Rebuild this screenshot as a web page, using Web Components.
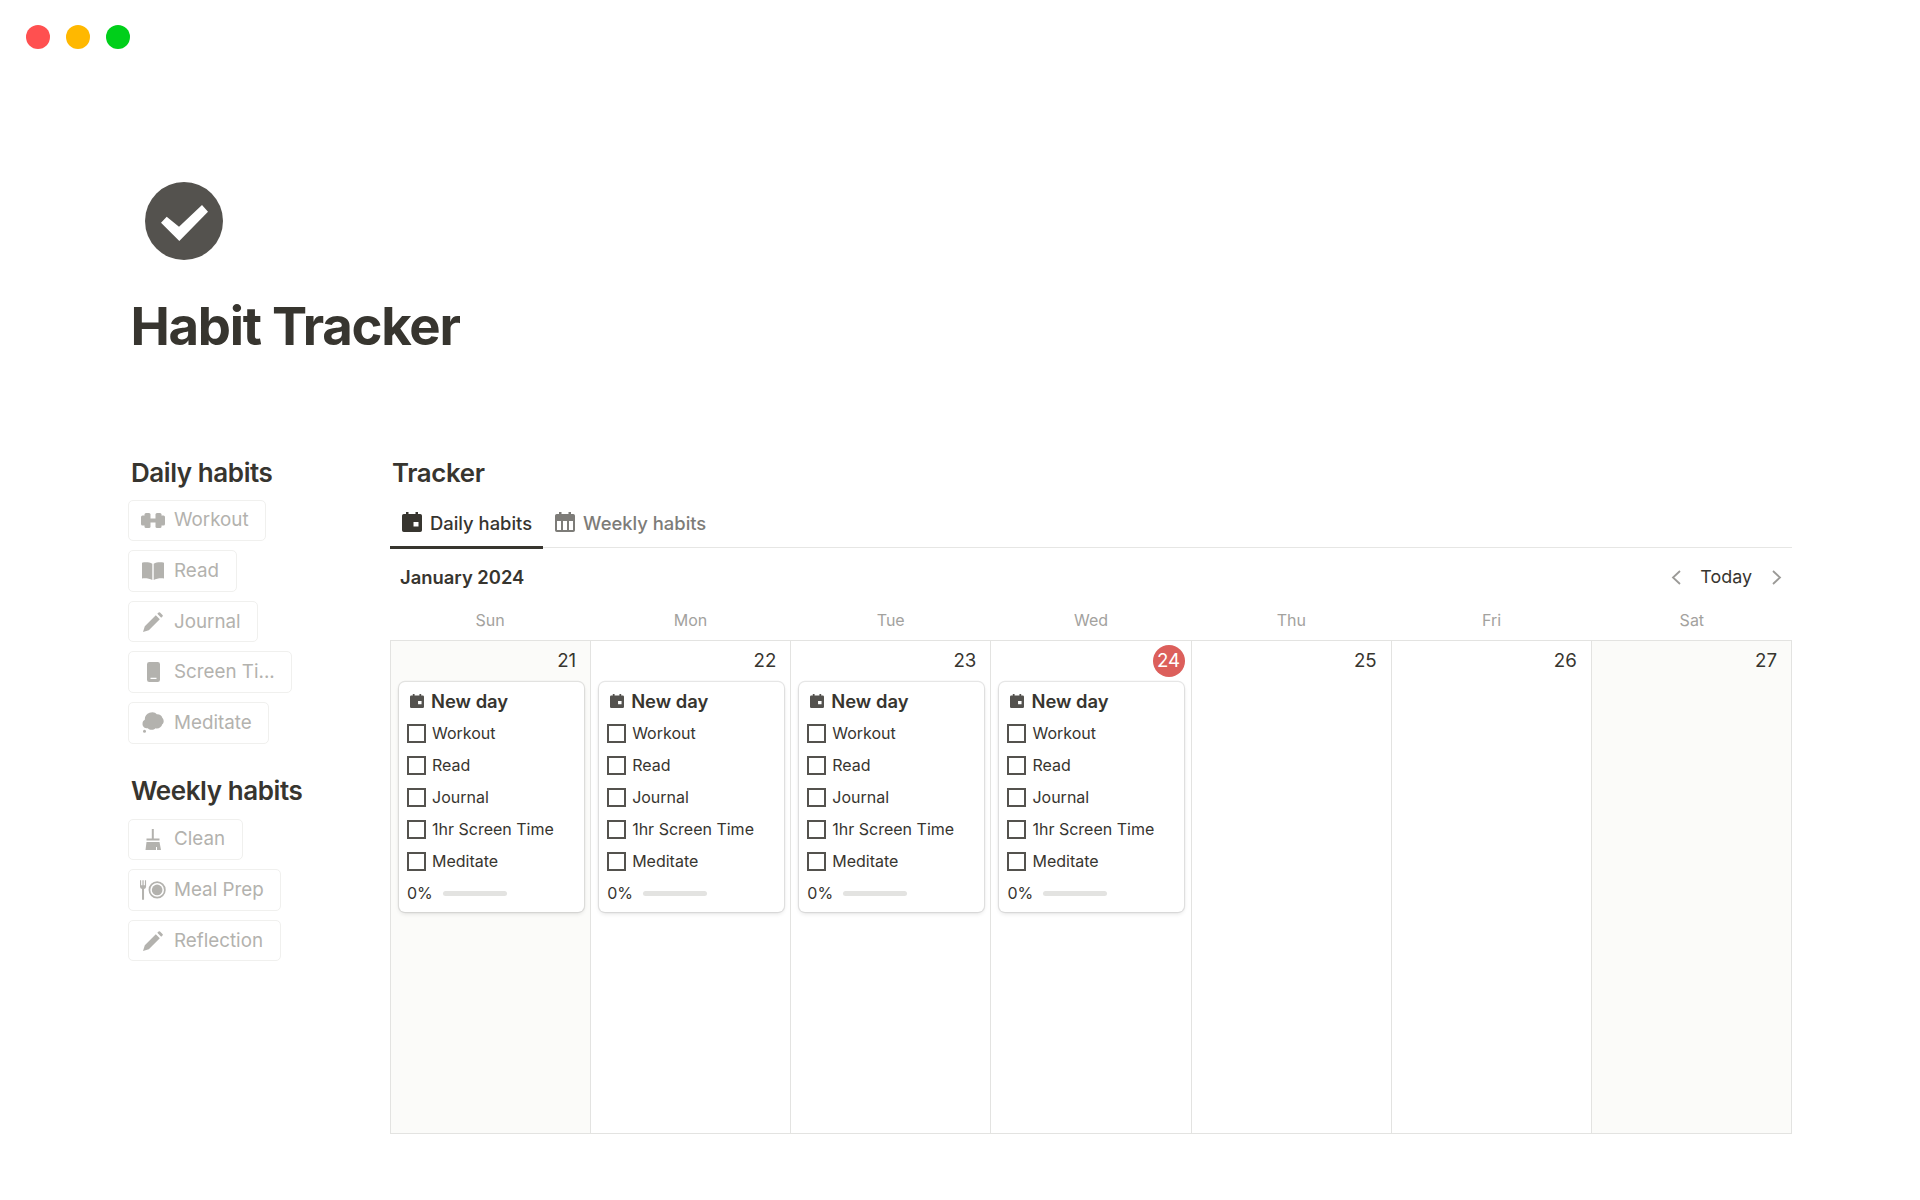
<!DOCTYPE html>
<html lang="en"><head><meta charset="utf-8"><title>Habit Tracker</title>
<style>
html,body{margin:0;padding:0;background:#fff}
body{width:1920px;height:1200px;overflow:hidden;font-family:Inter,"Liberation Sans",sans-serif;color:#37352f}
</style></head><body>
<habit-page></habit-page>
<script>
const ICONS={
dumbbell:'<svg viewBox="0 0 24 15" width="24" height="15"><g fill="currentColor"><rect x="0" y="2.500" width="5" height="10" rx="1.500"/><rect x="3.500" y="0" width="6" height="15" rx="1.500"/><rect x="9" y="5.500" width="6" height="4"/><rect x="14.500" y="0" width="6" height="15" rx="1.500"/><rect x="19" y="2.500" width="5" height="10" rx="1.500"/></g></svg>',
book:'<svg viewBox="0 0 22 18" width="22" height="18"><path fill="currentColor" d="M0 .8C3.500 0 7.500 .3 10.300 1.800V18C7.500 16.500 3.500 16 0 16.500ZM22 .8C18.500 0 14.500 .3 11.700 1.800V18C14.500 16.500 18.500 16 22 16.500Z"/></svg>',
pencil:'<svg viewBox="0 0 20 20" width="20" height="20"><path fill="currentColor" d="M0 20 1.800 14.200 12.800 3.200 16.800 7.200 5.800 18.200ZM14.300 1.800 15.600.500a1 1 0 0 1 1.400 0L19.500 3a1 1 0 0 1 0 1.400L18.200 5.700Z"/></svg>',
phone:'<svg viewBox="0 0 13 20" width="13" height="20"><path fill="currentColor" fill-rule="evenodd" d="M2.300 0h8.400A2.300 2.300 0 0 1 13 2.300v15.400a2.300 2.300 0 0 1-2.300 2.300H2.300A2.300 2.300 0 0 1 0 17.700V2.300A2.300 2.300 0 0 1 2.300 0ZM3.500 15.800v1.300h6v-1.300Z"/></svg>',
cloud:'<svg viewBox="0 0 22 21" width="22" height="21"><g fill="currentColor"><path d="M7.500.8C10.500-.4 13.500.3 14.800 2.200 17.500 2 19.800 3.300 20.300 5.800 22 7.500 22.300 10.500 20.300 12.300 19.500 15.500 16.500 17 13.500 16.300 11.500 18.300 7.800 18.300 5.800 16.300 3 16.500.5 14.800.5 12 .5 10 1.300 8.500 2.800 7.800 2.600 4.500 4.500 1.800 7.500.8Z"/><circle cx="2.500" cy="19.300" r="1.500"/></g></svg>',
broom:'<svg viewBox="0 0 16 21" width="16" height="21"><g fill="currentColor"><rect x="6.800" y="0" width="2" height="10"/><rect x="1.500" y="9.500" width="13" height="2"/><path d="M1.500 13h13L16 21H12v-3h-1v3H0.500Z"/></g></svg>',
meal:'<svg viewBox="0 0 27 20" width="27" height="20"><g fill="currentColor"><path d="M0 0h1.200v5H2.500V0H3.800v5h1.300V0H6.300v6.500A2.500 2.500 0 0 1 4.200 9V20H2.100V9A2.500 2.500 0 0 1 0 6.500Z"/><path fill-rule="evenodd" d="M17.800 1a8.900 8.900 0 1 1 0 17.800a8.900 8.900 0 0 1 0-17.800ZM17.800 2.800a7.100 7.100 0 1 0 0 14.200a7.100 7.100 0 0 0 0-14.200Z"/><circle cx="17.800" cy="9.900" r="5.500"/></g></svg>',
cal:'<svg viewBox="0 0 20 20" width="100%" height="100%" style="display:block"><path fill="currentColor" fill-rule="evenodd" d="M4 0h2.500v2h7V0H16v2h2.200A1.800 1.800 0 0 1 20 3.800v14.400a1.800 1.800 0 0 1-1.800 1.800H1.800A1.800 1.800 0 0 1 0 18.200V3.800A1.800 1.800 0 0 1 1.800 2H4ZM11.500 10v4.500H16.500V10Z"/></svg>',
week:'<svg viewBox="0 0 20 20" width="100%" height="100%" style="display:block"><path fill="currentColor" fill-rule="evenodd" d="M4 0h2.500v2h7V0H16v2h2.200A1.800 1.800 0 0 1 20 3.800v14.400a1.800 1.800 0 0 1-1.800 1.800H1.800A1.800 1.800 0 0 1 0 18.200V3.800A1.800 1.800 0 0 1 1.800 2H4ZM2 9v9h4V9ZM8 9v9h4V9ZM14 9v9h4V9Z"/></svg>'
};
function define(name,html,extra){
  const t=document.createElement('template');t.innerHTML=html;
  customElements.define(name,class extends HTMLElement{
    constructor(){super();this.attachShadow({mode:'open'}).appendChild(t.content.cloneNode(true));}
    connectedCallback(){if(extra)extra(this,this.shadowRoot);}
  });
}
define('mac-lights',`<style>:host{display:flex;gap:16px;padding:25px 0 0 26px}
i{display:block;width:24px;height:24px;border-radius:50%}</style>
<i style="background:#ff5050"></i><i style="background:#ffb800"></i><i style="background:#00cf1a"></i>`);

define('page-head',`<style>:host{display:block;padding:133px 0 0 133px}
.ic{display:block;margin-left:12px}
h1{margin:22px 0 0 -2.500px;font:700 52.700px/88px Inter,sans-serif;letter-spacing:-1.300px;color:#37352f}</style>
<svg class="ic" width="78" height="78" viewBox="0 0 78 78"><circle cx="39" cy="39" r="39" fill="#54524e"/><path d="M16 40.700 34.300 59 63 29.700 57 23 34 44.700 21.700 34.700Z" fill="#fff"/></svg>
<h1><slot></slot></h1>`);

define('side-heading',`<style>:host{display:block;font:600 26px/34px Inter,sans-serif;letter-spacing:-.42px;color:#37352f;padding-left:3px}</style><slot></slot>`);

define('habit-button',`<style>:host{display:flex;width:max-content;box-sizing:border-box;height:41.600px;align-items:center;border:1px solid #f0f0ee;border-radius:5px;padding:0 16.500px 0 11px;color:#b3b2ae;font:400 18.800px/24px Inter,sans-serif;margin-bottom:9px}
.i{width:26px;height:24px;display:flex;align-items:center;justify-content:center;margin-right:8px;flex:none}
svg{display:block}</style>
<span class="i"></span><slot></slot>`,(el,s)=>{s.querySelector('.i').innerHTML=ICONS[el.getAttribute('icon')]});

define('side-bar',`<style>:host{display:block;flex:none;box-sizing:border-box;padding-left:128px;width:390px}</style><slot></slot>`);

define('view-tabs',`<style>:host{display:flex;border-bottom:1px solid #e6e6e4;height:43px;box-sizing:border-box;font:500 18.400px/24px Inter,sans-serif;margin-top:15px}
</style><slot></slot>`);

define('view-tab',`<style>:host{display:flex;align-items:center;box-sizing:border-box;height:44px;padding:0 11px 8px 12px;color:#7d7c78;gap:8px}
:host([active]){color:#37352f;border-bottom:3px solid #37352f;padding-bottom:5px}
.i{width:20px;height:20px;display:block;margin-top:-3px}</style><span class="i"></span><slot></slot>`,(el,s)=>{s.querySelector('.i').innerHTML=ICONS[el.getAttribute('icon')]});

define('cal-bar',`<style>:host{display:flex;align-items:center;justify-content:space-between;height:28px;margin-top:15px;padding:0 10px;font:600 18.400px/28px Inter,sans-serif;color:#37352f}
.r{display:flex;align-items:center;font:400 17.900px/28px Inter,sans-serif}
svg{display:block}.t{margin:0 20px 0 19.200px}</style>
<span><slot></slot></span><span class="r"><svg width="10" height="15" viewBox="0 0 10 15"><path d="M9 1 2 7.500 9 14" fill="none" stroke="#9b9a97" stroke-width="1.800"/></svg><span class="t">Today</span><svg width="10" height="15" viewBox="0 0 10 15"><path d="M1 1l7 6.500L1 14" fill="none" stroke="#9b9a97" stroke-width="1.800"/></svg></span>`);

define('week-head',`<style>:host{display:grid;grid-template-columns:repeat(7,1fr);height:41px;align-items:center;margin-top:8px;text-align:center;font:400 16px/20px Inter,sans-serif;color:#a3a29e;box-sizing:border-box}
::slotted(span){display:block}</style><slot></slot>`);

define('cal-grid',`<style>:host{display:grid;grid-template-columns:repeat(7,1fr);height:494px;box-sizing:border-box;border-top:1px solid #e3e3e1;border-left:1px solid #e3e3e1;}</style><slot></slot>`);

define('day-cell',`<style>:host{display:block;box-sizing:border-box;border-right:1px solid #e3e3e1;border-bottom:1px solid #e3e3e1;min-width:0;padding:0 7px 0 7px}
:host([weekend]){background:#fbfbf9}
.n{display:flex;justify-content:flex-end;height:40px;align-items:center;font:400 18.700px/24px Inter,sans-serif;color:#37352f;padding-right:7px;box-sizing:border-box}
:host([today]) .n span{background:#dc5f5b;color:#fff;border-radius:50%;width:32px;height:32px;display:flex;align-items:center;justify-content:center;margin-right:-1px}
:host([today]) .n{padding-right:0}
</style><div class="n"><span></span></div><slot></slot>`,(el,s)=>{s.querySelector('.n span').textContent=el.getAttribute('n')});

define('check-row',`<style>:host{display:flex;align-items:center;height:32px;font:400 16px/20px Inter,sans-serif;color:#37352f}
b{display:block;width:19px;height:19px;box-sizing:border-box;border:2px solid #54524e;margin-right:6px;flex:none}</style><b></b><slot></slot>`);

define('day-card',`<style>:host{display:block;box-sizing:border-box;height:230px;border-radius:6px;background:#fff;box-shadow:0 0 0 1.200px rgba(15,15,15,.09),0 2px 4px rgba(15,15,15,.1);padding:0 8px;margin:1px 0 0 1px;width:185px}
.h{display:flex;align-items:center;box-sizing:border-box;height:35.400px;padding-top:2.400px;font:600 18.400px/24px Inter,sans-serif;color:#37352f}
.i{width:14px;height:14px;display:block;margin:0 7px 0 3px;color:#54524e}
.p{display:flex;align-items:center;height:32px;font:400 16px/20px Inter,sans-serif}
.b{display:block;width:64px;height:5px;border-radius:3px;background:#e3e3e1;margin-left:10px}
</style><div class="h"><span class="i"></span>New day</div><slot></slot><div class="p">0%<span class="b"></span></div>`,(el,s)=>{s.querySelector('.i').innerHTML=ICONS.cal});

define('tracker-view',`<style>:host{display:block;width:1402px;flex:none}
h2{margin:0;font:600 25.800px/34px Inter,sans-serif;letter-spacing:-.35px;color:#37352f;padding-left:2px}</style>
<h2>Tracker</h2><slot></slot>`);

define('habit-page',`<style>:host{display:block}
.cols{display:flex;margin-top:86px}</style>
<mac-lights></mac-lights>
<page-head>Habit Tracker</page-head>
<div class="cols">
<side-bar>
  <side-heading style="margin-bottom:9.700px">Daily habits</side-heading>
  <habit-button icon="dumbbell">Workout</habit-button>
  <habit-button icon="book">Read</habit-button>
  <habit-button icon="pencil">Journal</habit-button>
  <habit-button icon="phone">Screen Ti...</habit-button>
  <habit-button icon="cloud">Meditate</habit-button>
  <span style="display:block;height:21.700px"></span>
  <side-heading style="margin-bottom:10.300px">Weekly habits</side-heading>
  <habit-button icon="broom">Clean</habit-button>
  <habit-button icon="meal">Meal Prep</habit-button>
  <habit-button icon="pencil">Reflection</habit-button>
</side-bar>
<tracker-view>
  <view-tabs><view-tab active icon="cal">Daily habits</view-tab><view-tab icon="week">Weekly habits</view-tab></view-tabs>
  <cal-bar>January 2024</cal-bar>
  <week-head><span>Sun</span><span>Mon</span><span>Tue</span><span>Wed</span><span>Thu</span><span>Fri</span><span>Sat</span></week-head>
  <cal-grid id="g"></cal-grid>
</tracker-view>
</div>`,(el,s)=>{
  const g=s.getElementById('g');
  const rows=['Workout','Read','Journal','1hr Screen Time','Meditate'];
  [21,22,23,24,25,26,27].forEach((n,i)=>{
    const c=document.createElement('day-cell');c.setAttribute('n',n);
    if(i==0||i==6)c.setAttribute('weekend','');
    if(n==24)c.setAttribute('today','');
    if(i<4){const d=document.createElement('day-card');
      rows.forEach(r=>{const x=document.createElement('check-row');x.textContent=r;d.appendChild(x);});
      c.appendChild(d);}
    g.appendChild(c);
  });
});
</script></body></html>
